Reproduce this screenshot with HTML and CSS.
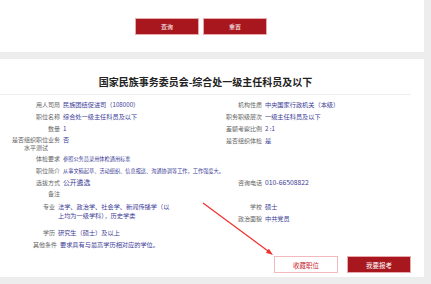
FILE: index.html
```html
<!DOCTYPE html>
<html lang="zh-CN">
<head>
    <meta charset="UTF-8">
    <meta name="viewport" content="width=device-width, initial-scale=1.0">
    <title>职位详情</title>
    <link rel="stylesheet" href="styles.css">
</head>
<body>

    <div class="page">
        <!-- Search buttons -->
        <div class="search-bar">
            <button class="btn btn-primary">查询</button>
            <button class="btn btn-primary">重置</button>
        </div>

        <!-- Job detail card -->
        <div class="job-card">
            <h2 class="job-title">国家民族事务委员会-综合处一级主任科员及以下</h2>

            <div class="info-grid">
                <div class="info-col">
                    <div class="info-row"><span class="info-label">用人司局</span><span class="info-value">民族团结促进司（108000）</span></div>
                    <div class="info-row"><span class="info-label">职位名称</span><span class="info-value">综合处一级主任科员及以下</span></div>
                    <div class="info-row"><span class="info-label">数量</span><span class="info-value">1</span></div>
                    <div class="info-row info-row-dense"><span class="info-label info-label-center">是否组织职位业务水平测试</span><span class="info-value">否</span></div>
                </div>
                <div class="info-col info-col-right">
                    <div class="info-row"><span class="info-label">机构性质</span><span class="info-value">中央国家行政机关（本级）</span></div>
                    <div class="info-row"><span class="info-label">职务职级层次</span><span class="info-value">一级主任科员及以下</span></div>
                    <div class="info-row"><span class="info-label">差额考察比例</span><span class="info-value">2 :1</span></div>
                    <div class="info-row"><span class="info-label">是否组织体检</span><span class="info-value">是</span></div>
                </div>
            </div>

            <div class="info-full">
                <div class="info-row"><span class="info-label">体检要求</span><span class="info-value info-value-sm">参照公务员录用体检通用标准</span></div>
                <div class="info-row"><span class="info-label">职位简介</span><span class="info-value info-value-sm">从事文稿起草、活动组织、信息报送、沟通协调等工作，工作强度大。</span></div>
            </div>

            <div class="info-grid info-grid-lower">
                <div class="info-col">
                    <div class="info-row"><span class="info-label">选拔方式</span><span class="info-value info-value-lg">公开遴选</span></div>
                    <div class="info-row info-row-tight"><span class="info-label">备注</span><span class="info-value"></span></div>
                    <div class="info-row info-row-push"><span class="info-label info-label-narrow">专业</span><span class="info-value info-value-wrap">法学、政治学、社会学、新闻传播学（以上均为一级学科），历史学类</span></div>
                    <div class="info-row info-row-gap"><span class="info-label info-label-narrow">学历</span><span class="info-value">研究生（硕士）及以上</span></div>
                    <div class="info-row"><span class="info-label info-label-mid">其他条件</span><span class="info-value">要求具有与最高学历相对应的学位。</span></div>
                </div>
                <div class="info-col info-col-right">
                    <div class="info-row"><span class="info-label">咨询电话</span><span class="info-value info-value-lg">010-66508822</span></div>
                    <div class="info-row info-row-tight"><span class="info-label"></span><span class="info-value"></span></div>
                    <div class="info-row info-row-push"><span class="info-label">学校</span><span class="info-value">硕士</span></div>
                    <div class="info-row"><span class="info-label">政治面貌</span><span class="info-value">中共党员</span></div>
                </div>
            </div>

            <div class="job-actions">
                <button class="btn btn-outline">收藏职位</button>
                <button class="btn btn-primary">我要报考</button>
            </div>

            <!-- annotation arrow -->
            <svg class="annot-arrow" width="424" height="218" viewBox="0 0 424 218">
                <line x1="203" y1="144" x2="268" y2="192" stroke="#f2302c" stroke-width="1.2" />
                <polygon points="273,196 265.9,193.8 268.9,189.8" fill="#f2302c" />
            </svg>
        </div>
    </div>

</body>
</html>
```

FILE: styles.css
```css
* {
    margin: 0;
    padding: 0;
    box-sizing: border-box;
}

body {
    font-family: "Noto Sans CJK SC", "Noto Sans", sans-serif;
    background: #ededed;
    color: #666;
    height: 284px;
    overflow: hidden;
}

.page {
    width: 424px;
}

.search-bar {
    background: #fff;
    height: 52px;
    display: flex;
    gap: 4px;
    padding: 18px 0 0 135px;
}

.btn {
    width: 64px;
    height: 17px;
    font-family: inherit;
    font-size: 6px;
    border: 1px solid #e6a9ac;
    cursor: pointer;
}

.btn-primary {
    background: #a8171e;
    color: #fff;
}

.btn-outline {
    background: #fff;
    color: #c8262e;
    border-color: #f2babc;
}

.job-card {
    position: relative;
    background: #fff;
    margin-top: 7px;
    height: 218px;
    padding-top: 17px;
    display: flex;
    flex-direction: column;
}

.job-title {
    margin-right: 13px;
    text-align: center;
    font-size: 10px;
    line-height: 12px;
    font-weight: bold;
    color: #222;
    padding-bottom: 6px;
    border-bottom: 1px solid #eee;
}

.info-grid {
    display: grid;
    grid-template-columns: 190px 1fr;
    padding-left: 12px;
    margin-top: 5px;
}

.info-grid-lower {
    margin-top: 3px;
}

.info-col {
    display: flex;
    flex-direction: column;
    gap: 3px;
}

.info-full {
    display: flex;
    flex-direction: column;
    gap: 3px;
    padding-left: 12px;
    margin-top: 2px;
}

.info-row {
    display: flex;
    gap: 3px;
    font-size: 6px;
    line-height: 9px;
    min-height: 9px;
}

.info-row-dense {
    line-height: 8px;
}

.info-row-tight {
    margin-top: -1px;
}

.info-row-push {
    margin-top: 1px;
}

.info-row-gap {
    margin-top: 5px;
}

.info-label {
    flex: none;
    width: 48px;
    text-align: right;
    color: #666;
}

.info-col-right .info-label {
    width: 60px;
}

.info-label-center {
    text-align: center;
}

.info-label-narrow {
    width: 43px;
}

.info-label-mid {
    width: 45px;
}

.info-value {
    font-size: 6.2px;
    color: #3c3c96;
    white-space: nowrap;
}

.info-value-sm {
    font-size: 5.2px;
}

.info-value-lg {
    font-size: 6.8px;
}

.info-value-wrap {
    white-space: normal;
    width: 114px;
}

.job-actions {
    margin-top: auto;
    display: flex;
    justify-content: flex-end;
    gap: 9px;
    padding: 0 13px 4px 0;
}

.job-actions .btn {
    font-size: 6.5px;
}

.annot-arrow {
    position: absolute;
    left: 0;
    top: 0;
    pointer-events: none;
}
```
